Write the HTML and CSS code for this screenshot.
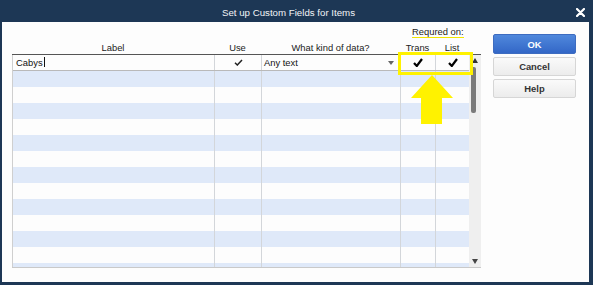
FILE: index.html
```html
<!DOCTYPE html>
<html lang="en">
<head>
    <meta charset="UTF-8">
    <title>Set up Custom Fields for Items</title>
    <link rel="stylesheet" href="styles.css">
</head>
<body>
    <div class="window">
        <div class="titlebar">
            <span class="title">Set up Custom Fields for Items</span>
            <svg class="close" width="9" height="9" viewBox="0 0 9 9">
                <path d="M1 1 L8 8 M8 1 L1 8" stroke="#fff" stroke-width="2.2" stroke-linecap="round"/>
            </svg>
        </div>
        <div class="content">
            <div class="fields">
                <div class="req-line"><span class="req">Requred on:</span></div>
                <div class="cols head">
                    <div>Label</div>
                    <div>Use</div>
                    <div>What kind of data?</div>
                    <div>Trans</div>
                    <div>List</div>
                </div>
                <div class="table-wrap">
                    <div class="rows" id="rows">
                        <div class="cols row first">
                            <div class="cell label-cell">Cabys<span class="caret"></span></div>
                            <div class="cell center">
                                <svg width="9" height="7" viewBox="0 0 9 7"><path d="M1 3.8 L3.3 6 L8 1" fill="none" stroke="#222" stroke-width="1.5"/></svg>
                            </div>
                            <div class="cell data-cell">Any text<span class="drop"></span></div>
                            <div class="cell center">
                                <svg width="10" height="9" viewBox="0 0 10 9"><path d="M1 5 L3.8 8 L9 1" fill="none" stroke="#000" stroke-width="2.2"/></svg>
                            </div>
                            <div class="cell center">
                                <svg width="10" height="9" viewBox="0 0 10 9"><path d="M1 5 L3.8 8 L9 1" fill="none" stroke="#000" stroke-width="2.2"/></svg>
                            </div>
                        </div>
                    </div>
                    <div class="scrollbar">
                        <span class="arrow-up"></span>
                        <span class="thumb"></span>
                        <span class="arrow-down"></span>
                    </div>
                </div>
            </div>
            <div class="buttons">
                <button class="btn ok">OK</button>
                <button class="btn">Cancel</button>
                <button class="btn">Help</button>
            </div>

            <div class="highlight"></div>
            <svg class="pointer" width="42" height="50" viewBox="0 0 42 50">
                <polygon points="21,0 42,23 31,23 31,49 10,49 10,23 0,23" fill="#fff200"/>
            </svg>
        </div>
    </div>

    <script>
        function addRows() {
            const rows = document.getElementById('rows');
            for (let i = 0; i < 13; i++) {
                const row = document.createElement('div');
                row.className = i % 2 === 0 ? 'cols row blue' : 'cols row';
                for (let c = 0; c < 5; c++) {
                    const cell = document.createElement('div');
                    cell.className = 'cell';
                    row.appendChild(cell);
                }
                rows.appendChild(row);
            }
        }

        addRows();
    </script>
</body>
</html>
```

FILE: styles.css
```css
body {
    margin: 0;
    background-color: #1d3755;
    font-family: "Liberation Sans", Arial, sans-serif;
    color: #222;
    overflow: hidden;
}
.window {
    width: 593px;
    height: 285px;
    display: flex;
    flex-direction: column;
}
.titlebar {
    height: 22px;
    display: flex;
    align-items: center;
    justify-content: center;
    padding-right: 16px;
    position: relative;
}
.title {
    color: #f2f4f7;
    font-size: 9.7px;
    margin-top: 2px;
}
.close {
    position: absolute;
    right: 8px;
    top: 8px;
}
.content {
    height: 260px;
    margin: 0 4px 3px 2px;
    background-color: #fdfdfd;
    display: flex;
    padding-left: 10px;
    position: relative;
}
.fields {
    width: 469px;
    display: flex;
    flex-direction: column;
}
.req-line {
    padding-top: 4px;
    height: 12px;
    padding-left: 400px;
    font-size: 9.4px;
    line-height: 12px;
}
.req {
    display: inline-block;
    line-height: 11px;
    border-bottom: 1px solid #f2e600;
}
.cols {
    display: grid;
    grid-template-columns: 202px 47px 139px 35px 34px;
}
.head {
    padding-top: 4px;
    height: 12px;
    font-size: 9.4px;
    line-height: 12px;
    text-align: center;
    color: #222;
}
.table-wrap {
    height: 214px;
    display: flex;
    border-top: 1px solid #555;
    border-bottom: 1px solid #c9c9c9;
    box-sizing: border-box;
}
.rows {
    width: 457px;
    overflow: hidden;
    border-left: 1px solid #cfcfcf;
}
.row {
    height: 16px;
    background-color: #fdfdfd;
}
.row.blue {
    background-color: #dfe9f9;
}
.cell {
    border-right: 1px solid #d3d6da;
    font-size: 9.4px;
    line-height: 16px;
    position: relative;
}
.cell:last-child {
    border-right: none;
}
.row.first {
    border-bottom: 1px solid #b9b9b9;
    box-sizing: border-box;
}
.row.first .cell {
    line-height: 15px;
}
.label-cell {
    border-left: 1px solid #777;
    margin-left: -1px;
    padding-left: 3px;
    color: #111;
}
.caret {
    display: inline-block;
    width: 1px;
    height: 10px;
    background-color: #111;
    vertical-align: -1px;
    margin-left: 1px;
}
.data-cell {
    padding-left: 2px;
    color: #111;
}
.drop {
    position: absolute;
    right: 6px;
    top: 6px;
    border-left: 3px solid transparent;
    border-right: 3px solid transparent;
    border-top: 4px solid #666;
}
.center {
    display: flex;
    align-items: center;
    justify-content: center;
}
.scrollbar {
    width: 12px;
    background-color: #efefef;
    position: relative;
}
.arrow-up {
    position: absolute;
    left: 3px;
    top: 3px;
    border-left: 3px solid transparent;
    border-right: 3px solid transparent;
    border-bottom: 5px solid #333;
}
.arrow-down {
    position: absolute;
    left: 3px;
    bottom: 3px;
    border-left: 3px solid transparent;
    border-right: 3px solid transparent;
    border-top: 5px solid #444;
}
.thumb {
    position: absolute;
    left: 2px;
    top: 12px;
    width: 5px;
    height: 46px;
    border-radius: 2px;
    background-color: #7b7b7b;
}
.buttons {
    margin-left: 12px;
    padding-top: 12px;
    width: 83px;
    display: flex;
    flex-direction: column;
    gap: 3px;
}
.btn {
    height: 19px;
    padding: 0;
    border: 1px solid #d6d6d6;
    border-radius: 2px;
    background: linear-gradient(#fafafa, #ececec);
    font-family: "Liberation Sans", Arial, sans-serif;
    font-size: 9.4px;
    font-weight: bold;
    color: #333;
}
.btn.ok {
    height: 20px;
    border-color: #3e6cc0;
    background: linear-gradient(#5088dc, #3367c7);
    color: #fff;
}
.highlight {
    position: absolute;
    left: 396px;
    top: 30px;
    width: 69px;
    height: 17px;
    border: 3px solid #fff200;
}
.pointer {
    position: absolute;
    left: 409px;
    top: 53px;
}
```
